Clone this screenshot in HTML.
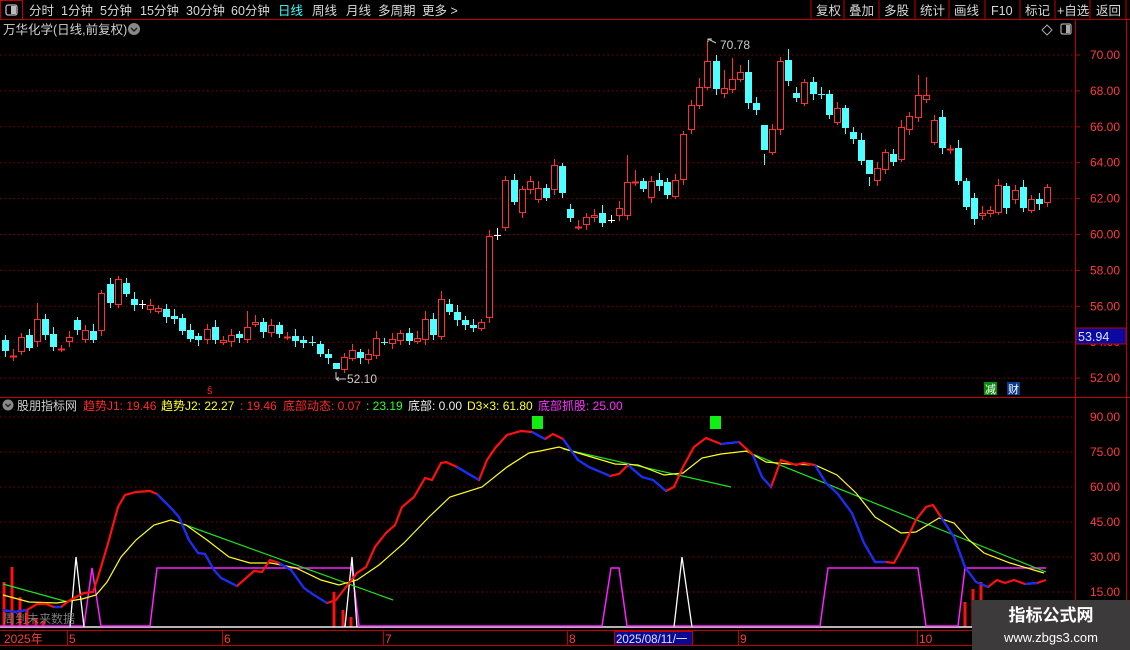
<!DOCTYPE html>
<html><head><meta charset="utf-8">
<style>
html,body{margin:0;padding:0;background:#000;width:1130px;height:650px;overflow:hidden;font-family:"Liberation Sans","Noto Sans CJK SC",sans-serif}
svg{position:absolute;left:0;top:0}
</style></head>
<body>
<svg id="s" width="1130" height="650" xmlns="http://www.w3.org/2000/svg" font-family="Liberation Sans, Noto Sans CJK SC, sans-serif">
<rect width="1130" height="650" fill="#000"/>
<!-- toolbar -->
<line x1="0" y1="19.5" x2="1130" y2="19.5" stroke="#c00000"/>
<rect x="0.5" y="0.5" width="22" height="19" fill="none" stroke="#c00000"/>
<rect x="6" y="5" width="11" height="10" rx="2" fill="none" stroke="#bbb" stroke-width="1.3"/>
<rect x="11" y="6" width="5" height="8" fill="#bbb"/>
<g font-size="12.5" fill="#d8d8d8">
<text x="29" y="15">分时</text><text x="61" y="15">1分钟</text><text x="100" y="15">5分钟</text>
<text x="140" y="15">15分钟</text><text x="186" y="15">30分钟</text><text x="231" y="15">60分钟</text>
<text x="278" y="15" fill="#40ffff">日线</text><text x="312" y="15">周线</text><text x="346" y="15">月线</text>
<text x="378" y="15">多周期</text><text x="422" y="15">更多 &gt;</text>
</g>
<g stroke="#c00000" fill="none">
<line x1="811" y1="0" x2="811" y2="19"/><line x1="844" y1="0" x2="844" y2="19"/><line x1="879" y1="0" x2="879" y2="19"/>
<line x1="915" y1="0" x2="915" y2="19"/><line x1="949" y1="0" x2="949" y2="19"/><line x1="985" y1="0" x2="985" y2="19"/>
<line x1="1020" y1="0" x2="1020" y2="19"/><line x1="1055" y1="0" x2="1055" y2="19"/><line x1="1090" y1="0" x2="1090" y2="19"/>
<line x1="1126" y1="0" x2="1126" y2="19"/>
</g>
<g font-size="12.5" fill="#d8d8d8">
<text x="816" y="15">复权</text><text x="849" y="15">叠加</text><text x="884" y="15">多股</text><text x="920" y="15">统计</text>
<text x="954" y="15">画线</text><text x="991" y="15">F10</text><text x="1025" y="15">标记</text><text x="1057" y="15">+自选</text><text x="1096" y="15">返回</text>
</g>
<!-- title -->
<text x="3" y="34" font-size="12.5" fill="#d0d0d0">万华化学(日线,前复权)</text>
<circle cx="134" cy="29" r="6" fill="#888"/><path d="M131 28l3 3 3-3" stroke="#222" stroke-width="1.5" fill="none"/>
<path d="M1047 25l5 5-5 5-5-5z" fill="none" stroke="#aaa"/>
<rect x="1061" y="24" width="10" height="10" rx="1.5" fill="none" stroke="#aaa" stroke-width="1.2"/><rect x="1066" y="25" width="4" height="8" fill="#aaa"/>
<!-- axes -->
<line x1="1075.5" y1="20" x2="1075.5" y2="630" stroke="#c00000"/>
<line x1="1126.5" y1="20" x2="1126.5" y2="630" stroke="#c00000"/>
<line x1="0" y1="397.5" x2="1130" y2="397.5" stroke="#c00000"/>
<g id="grid"></g>
<g id="candles"></g>
<!-- price labels -->
<g font-size="12" fill="#ff3b3b" id="plabels"></g>
<rect x="1076" y="328" width="50" height="16" fill="#0a0aa0" stroke="#c00000"/>
<text x="1078" y="341" font-size="12.5" fill="#e0e0ff">53.94</text>
<!-- high/low marks -->
<path d="M708 42 v-3 h4 M708 39 l8 4" stroke="#ccc" fill="none"/>
<text x="720" y="49" font-size="12" fill="#ccc">70.78</text>
<path d="M336 372 v7 M336 379 h10 M336 379 l3 -2 M336 379 l3 2" stroke="#ccc" fill="none"/>
<text x="347" y="383" font-size="12" fill="#ccc">52.10</text>
<text x="207" y="394" font-size="11" fill="#ff2020">ŝ</text>
<rect x="984" y="382" width="13" height="13" fill="#0a8a0a"/><text x="985" y="393" font-size="11" fill="#fff">减</text>
<rect x="1007" y="382" width="13" height="13" fill="#0a3a8a"/><text x="1008" y="393" font-size="11" fill="#fff">财</text>
<!-- indicator header -->
<circle cx="8" cy="405" r="5.5" fill="#888"/><path d="M5.5 404l2.5 2.5 2.5-2.5" stroke="#222" stroke-width="1.4" fill="none"/>
<g font-size="12">
<text x="17" y="410" fill="#d0d0d0">股朋指标网</text>
<text x="83" y="410" fill="#ff2a2a">趋势J1: 19.46</text>
<text x="161" y="410" fill="#ffff30">趋势J2: 22.27</text>
<text x="240" y="410" fill="#ff2a2a">: 19.46</text>
<text x="283" y="410" fill="#ff2a2a">底部动态: 0.07</text>
<text x="366" y="410" fill="#30ff30">: 23.19</text>
<text x="408" y="410" fill="#f0f0f0">底部: 0.00</text>
<text x="467" y="410" fill="#ffff30">D3×3: 61.80</text>
<text x="538" y="410" fill="#ff30ff">底部抓股: 25.00</text>
</g>
<rect x="532" y="416" width="11" height="13" fill="#10f010"/>
<rect x="710" y="416" width="11" height="13" fill="#10f010"/>
<!-- red bars -->
<g stroke="#ff1010" stroke-width="3">
<line x1="4" y1="582" x2="4" y2="627"/><line x1="12" y1="567" x2="12" y2="627"/><line x1="20" y1="597" x2="20" y2="627"/>
<line x1="27" y1="610" x2="27" y2="627"/><line x1="36" y1="618" x2="36" y2="627"/><line x1="43" y1="621" x2="43" y2="627"/>
<line x1="334" y1="592" x2="334" y2="627"/><line x1="343" y1="610" x2="343" y2="627"/><line x1="351" y1="617" x2="351" y2="627"/>
<line x1="965" y1="602" x2="965" y2="627"/><line x1="973" y1="589" x2="973" y2="627"/><line x1="981" y1="582" x2="981" y2="627"/>
</g>
<!-- baseline -->
<line x1="0" y1="627" x2="1046" y2="627" stroke="#f0f0f0" stroke-width="1.5"/>
<!-- magenta -->
<polyline fill="none" stroke="#ff20ff" stroke-width="1.5" points="0,626 84,626 92,568 101,626 150,626 157,568 352,568 359,626 602,626 611,568 619,568 627,626 820,626 828,568 918,568 926,626 958,626 965,568 1046,568"/>
<!-- white spikes -->
<polyline fill="none" stroke="#fff" stroke-width="1.3" points="70,627 76,557 84,627"/>
<polyline fill="none" stroke="#fff" stroke-width="1.3" points="345,627 352,557 357,627"/>
<polyline fill="none" stroke="#fff" stroke-width="1.3" points="674,627 682,557 692,627"/>
<!-- green lines -->
<g stroke="#20e020" stroke-width="1.2" fill="none">
<line x1="3" y1="584" x2="68" y2="602"/><line x1="180" y1="523" x2="393" y2="600"/>
<line x1="563" y1="449" x2="731" y2="487"/><line x1="745" y1="451" x2="1046" y2="572"/>
</g>
<!-- yellow -->
<polyline fill="none" stroke="#ffff20" stroke-width="1.2" points="3,595 29,602 57,603 82,599 96,595 107,582 121,557 136,540 154,525 171,520 186,525 207,540 229,557 250,563 271,563 296,568 321,580 339,585 357,580 379,565 404,543 429,517 450,497 482,487 507,467 529,453 540,451 559,447 578,453 615,464 638,465 664,475 683,473 702,458 721,454 747,451 766,462 788,464 815,465 837,475 856,493 875,517 901,533 916,532 939,518 954,523 969,540 984,553 1010,563 1044,573"/>
<!-- J1 red -->
<polyline id="j1" fill="none" stroke="#ff1010" stroke-width="2.2" points="3,610 14,612 27,610 37,604 46,604 54,607 61,607 70,600 84,593 93,592 98,577 107,547 118,507 125,495 136,492 150,491 157,494 171,508 179,517 189,540 198,553 205,554 214,570 221,578 237,586 254,571 262,572 270,560 279,563 291,570 304,588 314,595 327,603 336,600 346,587 357,573 366,567 375,547 386,533 395,525 402,507 414,497 425,478 432,480 441,463 446,462 457,467 479,480 487,460 496,447 507,435 521,431 532,432 545,439 553,434 563,439 578,460 589,467 610,476 619,474 628,465 642,477 653,480 666,491 674,487 683,467 694,447 706,438 721,444 739,442 753,455 762,477 771,487 781,460 796,465 803,463 815,465 826,483 837,493 852,513 864,543 875,562 886,562 894,563 905,543 916,520 926,507 933,505 941,517 954,537 965,567 976,582 988,587 997,580 1005,583 1014,580 1025,584 1037,583 1046,580"/>
<g fill="none" stroke="#1030ff" stroke-width="2.2">
<polyline points="3,610 14,612 27,610"/>
<polyline points="54,607 61,607"/>
<polyline points="157,494 171,508 179,517 189,540 198,553 205,554 214,570 221,578 237,586"/>
<polyline points="279,563 291,570 304,588 314,595 327,603"/>
<polyline points="457,467 479,480"/>
<polyline points="532,432 545,439"/>
<polyline points="563,439 578,460 589,467 610,476"/>
<polyline points="628,465 642,477 653,480 666,491"/>
<polyline points="721,444 739,442"/>
<polyline points="753,455 762,477 771,487"/>
<polyline points="815,465 826,483 837,493 852,513 864,543 875,562 886,562"/>
<polyline points="941,517 954,537 965,567 976,582 988,587"/>
<polyline points="1025,584 1037,583"/>
</g>
<text x="3" y="623" font-size="12" fill="#909090" opacity="0.85">周到未来数据</text>
<!-- indicator labels -->
<g font-size="12" fill="#ff3b3b">
<text x="1090" y="421">90.00</text><text x="1090" y="456">75.00</text><text x="1090" y="491">60.00</text>
<text x="1090" y="526">45.00</text><text x="1090" y="561">30.00</text><text x="1090" y="596">15.00</text>
</g>
<!-- date axis -->
<line x1="0" y1="630.5" x2="1130" y2="630.5" stroke="#c00000"/>
<line x1="0" y1="645.5" x2="1130" y2="645.5" stroke="#c00000"/>
<g stroke="#c00000"><line x1="67.5" y1="630" x2="67.5" y2="645"/><line x1="222.5" y1="630" x2="222.5" y2="645"/><line x1="383.5" y1="630" x2="383.5" y2="645"/><line x1="567.5" y1="630" x2="567.5" y2="645"/><line x1="738.5" y1="630" x2="738.5" y2="645"/><line x1="917.5" y1="630" x2="917.5" y2="645"/></g>
<g font-size="12" fill="#ff3b3b">
<text x="4" y="643">2025年</text><text x="69" y="643">5</text><text x="224" y="643">6</text><text x="385" y="643">7</text>
<text x="569" y="643">8</text><text x="740" y="643">9</text><text x="919" y="643">10</text>
</g>
<rect x="614.5" y="631.5" width="78" height="14" fill="#0a0a90" stroke="#c00000"/>
<text x="616" y="643" font-size="11.5" fill="#e0e0ff">2025/08/11/一</text>
<!-- watermark -->
<rect x="972" y="600" width="158" height="50" fill="#3c3a3a"/>
<text x="1051" y="621" font-size="17" font-weight="bold" fill="#fff" text-anchor="middle">指标公式网</text>
<text x="1051" y="642" font-size="13" fill="#fff" text-anchor="middle">www.zbgs3.com</text>
</svg>
<script>
var NS="http://www.w3.org/2000/svg";
function el(p,t,a){var e=document.createElementNS(NS,t);for(var k in a)e.setAttribute(k,a[k]);p.appendChild(e);return e;}
var g=document.getElementById('grid');
for(var i=0;i<10;i++){var y=55+i*35.9;el(g,'line',{x1:0,x2:1075,y1:y,y2:y,stroke:'#8a0000','stroke-dasharray':'1.5 3'});}
for(var i=0;i<6;i++){var y=417+i*35;el(g,'line',{x1:0,x2:1075,y1:y,y2:y,stroke:'#8a0000','stroke-dasharray':'1.5 3'});}
var pl=document.getElementById('plabels');
var ps=['70.00','68.00','66.00','64.00','62.00','60.00','58.00','56.00','54.00','52.00'];
for(var i=0;i<10;i++){var y=55+i*35.9;var t=el(pl,'text',{x:1090,y:y+4});t.textContent=ps[i];el(pl,'line',{x1:1075,x2:1080,y1:y,y2:y,stroke:'#c00000'});}
var D="340,351,c;356,356,r;337,351,r;335,348,c;319,341,r;319,335,c;334,347,c;349,349,r;337,341,r;320,330,c;330,339,r;331,340,c;293,330,r;284,303,c;279,304,r;283,294,c;299,305,c;304,304,w;305,309,r;308,311,r;309,317,c;316,319,c;318,331,c;330,339,c;336,340,c;329,339,r;327,340,c;340,342,r;335,341,r;334,338,c;327,339,r;322,324,r;322,332,c;325,332,r;325,334,c;337,337,r;336,341,c;340,343,c;342,342,c;344,354,c;354,358,c;363,369,c;357,369,r;350,358,r;352,358,c;354,359,r;338,355,r;342,342,c;339,343,r;333,340,r;333,341,c;338,341,r;319,339,r;319,335,c;299,336,r;304,312,c;312,320,c;320,325,c;325,328,c;322,328,r;236,317,r;235,235,w;180,227,r;180,202,c;189,212,r;181,189,r;188,199,r;188,198,c;165,189,r;166,193,c;209,218,c;227,227,r;217,224,r;215,217,r;213,223,c;220,220,w;208,215,r;182,215,r;182,182,r;181,189,c;181,197,r;180,186,c;182,195,c;180,196,r;134,179,r;105,129,r;87,105,r;61,87,r;61,89,c;88,93,r;79,89,r;72,79,r;72,103,c;103,110,c;125,150,c;129,152,r;61,129,r;60,81,c;93,98,c;82,103,r;82,94,c;94,94,c;94,115,c;108,122,r;108,128,c;132,139,c;140,161,c;160,174,c;168,180,r;152,169,r;154,162,c;127,159,r;116,129,r;95,117,r;95,99,r;120,142,r;117,148,c;149,149,r;148,181,c;181,207,c;198,219,c;213,215,r;210,213,r;185,212,r;186,208,c;190,199,r;187,208,c;199,210,r;199,204,c;187,202,r";
var HW={5:303,13:290,55:291,61:230,87:78,88:41,90:70,91:58,97:57,98:49,93:60,42:377,114:75,115:77,119:140,108:186,95:165,31:311,53:311,75:205,78:155,79:170};
var cg=document.getElementById('candles');
D.split(';').forEach(function(s,i){var a=s.split(','),t=+a[0],b=+a[1],c=a[2];var n=i+1;var x=Math.round(4.5+i*8.08)+0.5;
var col=c=='r'?'#ff3030':(c=='c'?'#50ffff':'#ffffff');
var hi=HW[n]||t-3-(n*7%5),lo=b+3+(n*3%4);if(n==42)lo=377;
el(cg,'line',{x1:x,x2:x,y1:hi,y2:lo,stroke:col});
if(b-t<1.5){el(cg,'line',{x1:x-3.5,x2:x+3.5,y1:t+0.5,y2:t+0.5,stroke:col,'stroke-width':c=='w'||n==39||n==48||n==62||n==102?1:2});}
else if(c=='r'){el(cg,'rect',{x:x-3,y:t+0.5,width:6,height:b-t,fill:'#000',stroke:col});}
else{el(cg,'rect',{x:x-3.5,y:t,width:7,height:b-t,fill:col});}
});
</script>
</body></html>
